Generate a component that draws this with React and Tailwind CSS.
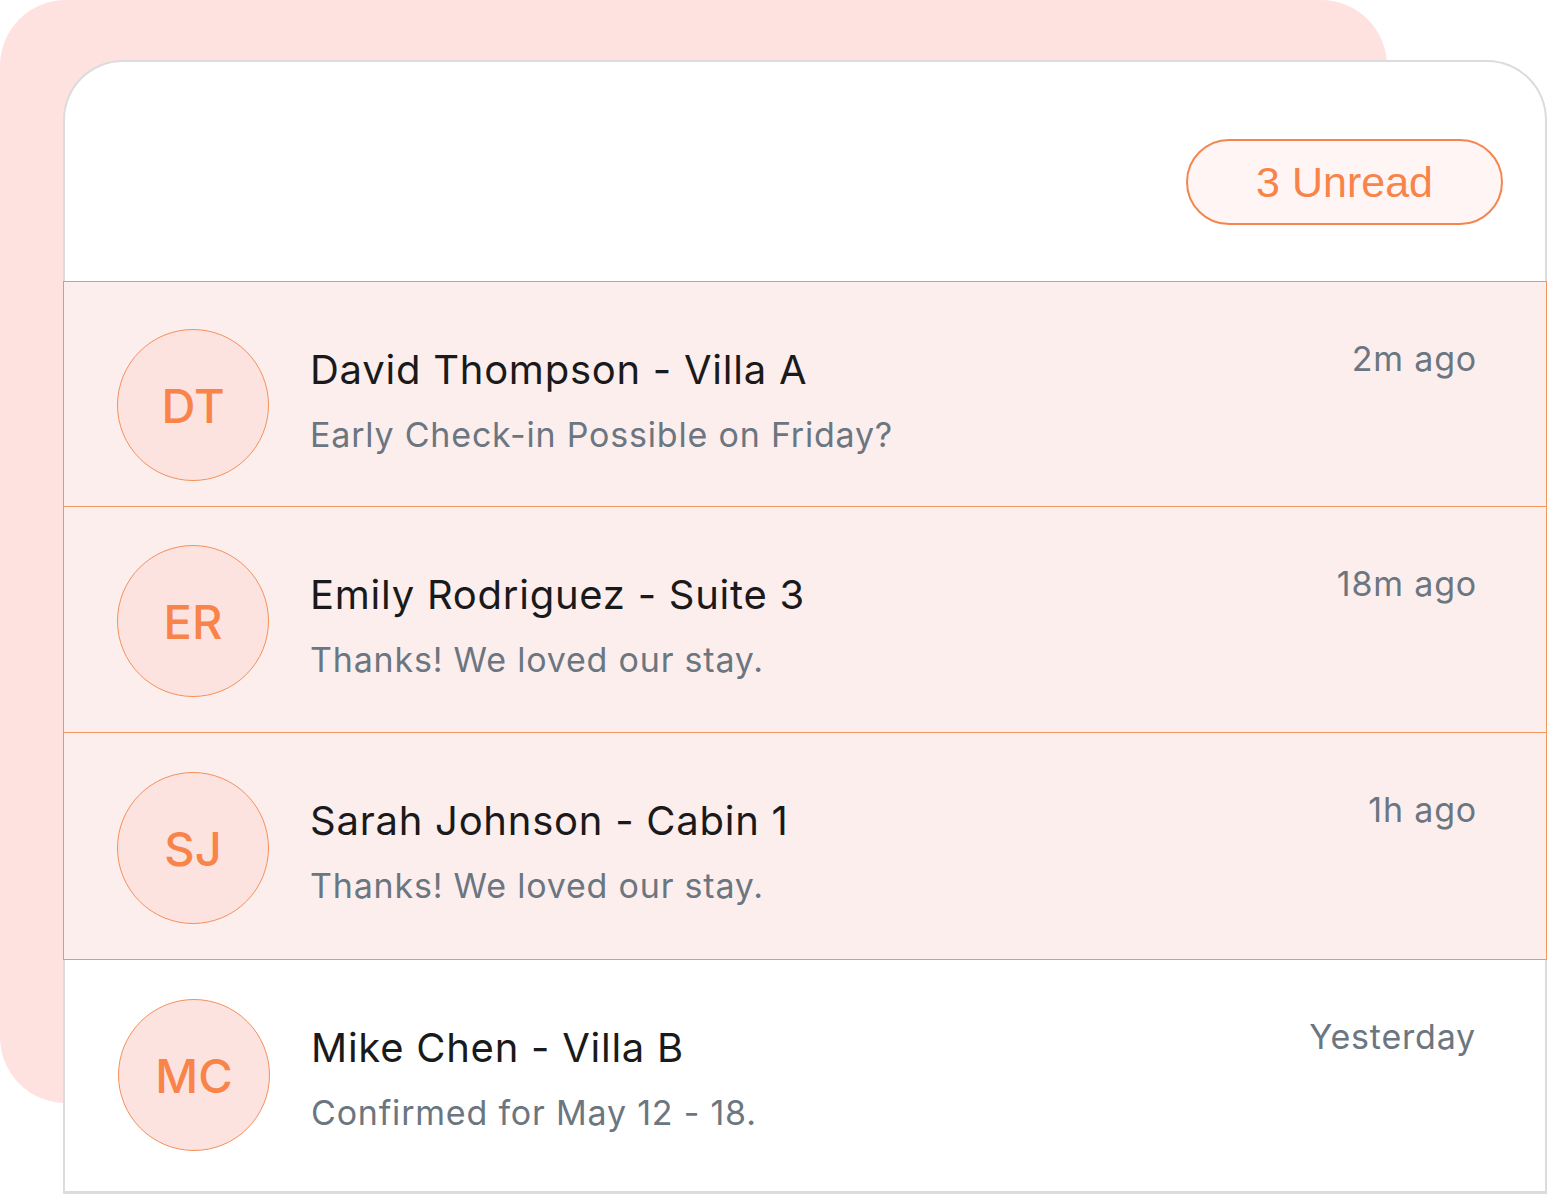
import React from 'react'

const messages = [
  { initials: 'DT', name: 'David Thompson - Villa A', text: 'Early Check-in Possible on Friday?', time: '2m ago', unread: true, h: 'h-[226px]', top: 'pt-[47px]' },
  { initials: 'ER', name: 'Emily Rodriguez - Suite 3', text: 'Thanks! We loved our stay.', time: '18m ago', unread: true, h: 'h-[227px]', top: 'pt-[38px]' },
  { initials: 'SJ', name: 'Sarah Johnson - Cabin 1', text: 'Thanks! We loved our stay.', time: '1h ago', unread: true, h: 'h-[228px]', top: 'pt-[39px]' },
  { initials: 'MC', name: 'Mike Chen - Villa B', text: 'Confirmed for May 12 - 18.', time: 'Yesterday', unread: false, h: 'h-[228px]', top: 'pt-[39px]' }
]

const MessageRow = ({ msg }) => (
  <div
    className={`relative flex items-start pl-[53px] pr-[69px] ${msg.h} ${
      msg.unread
        ? 'bg-[#fdeeee] border border-[#f4955c] -mx-[2px] -mt-px'
        : 'bg-white'
    }`}
  >
    <div className={`shrink-0 ${msg.top}`}>
      <div className="w-[152px] h-[152px] rounded-full bg-[#fde3df] border-[1.5px] border-[#f4905a] flex items-center justify-center">
        <span className="text-[47px] font-medium text-[#f8844a] leading-none">{msg.initials}</span>
      </div>
    </div>
    <div className="flex-1 pl-[41px] pt-[64px]">
      <div className="text-[40px] leading-[48px] tracking-[0.75px] text-[#1a1a1a]">{msg.name}</div>
      <div className="text-[34px] leading-[40px] tracking-[0.8px] mt-[21px] text-[#6b7680]">{msg.text}</div>
    </div>
    <div className="pt-[57px] text-[34px] leading-[40px] tracking-[0.8px] text-[#6b7680]">{msg.time}</div>
  </div>
)

export default function App() {
  return (
    <div
      className="relative w-[1547px] h-[1194px] overflow-hidden bg-white"
      style={{ fontFamily: 'Inter, "Liberation Sans", sans-serif' }}
    >
      <div className="absolute left-0 top-0 w-[1387px] h-[1103px] rounded-[66px] bg-[#fee2df]" />
      <div className="relative ml-[63px] mt-[60px] w-[1484px] h-[1134px] bg-white border-2 border-b-[3px] border-[#dcdcdc] rounded-t-[60px]">
        <div className="h-[220px] flex justify-end items-start pt-[77px] pr-[42px]">
          <div className="h-[86px] px-[68px] rounded-full border-2 border-[#f4864d] bg-[#fff5f4] flex items-center">
            <span className="text-[43px] text-[#f8844a] leading-none" style={{ fontFamily: '"Liberation Sans", Arial, sans-serif' }}>3 Unread</span>
          </div>
        </div>
        {messages.map((msg) => (
          <MessageRow key={msg.initials} msg={msg} />
        ))}
      </div>
    </div>
  )
}
